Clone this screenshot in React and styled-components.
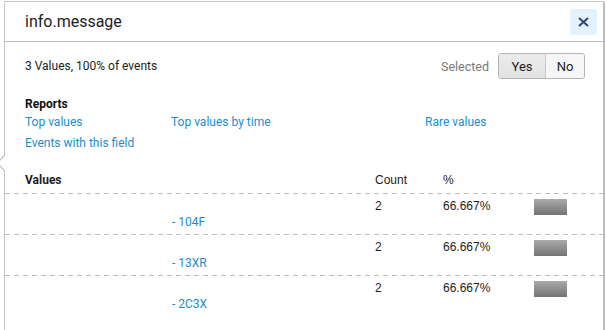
import React from 'react';
import styled, { createGlobalStyle } from 'styled-components';

const GlobalStyle = createGlobalStyle`
  html, body {
    margin: 0;
    padding: 0;
    background: #fff;
    font-family: Roboto, "Liberation Sans", Arial, sans-serif;
    color: #222;
  }
`;

const Page = styled.div`
  width: 607px;
  height: 330px;
  overflow: hidden;
  padding: 1px 2px 0 4px;
  box-sizing: border-box;
`;

const Popover = styled.div`
  position: relative;
  width: 601px;
  height: 340px;
  box-sizing: border-box;
  background: #fff;
  border: 1px solid #c6c6c6;
  border-right: 2px solid #bdbdbd;
  border-radius: 2px;

  /* little arrow pointing at the field list */
  &::before {
    content: '';
    position: absolute;
    left: -9px;
    top: 152px;
    border: 9px solid transparent;
    border-left: 0;
    border-right-color: #c6c6c6;
  }
  &::after {
    content: '';
    position: absolute;
    left: -7px;
    top: 153px;
    border: 8px solid transparent;
    border-left: 0;
    border-right-color: #fff;
  }
`;

const Header = styled.div`
  display: flex;
  align-items: center;
  justify-content: space-between;
  height: 39px;
  padding: 0 6px 0 20px;
  border-bottom: 1px solid #bdbdbd;
`;

const Title = styled.h2`
  margin: 0;
  font-size: 16px;
  font-weight: 400;
  color: #1d1d1d;
`;

const CloseButton = styled.button`
  display: flex;
  align-items: center;
  justify-content: center;
  width: 27px;
  height: 26px;
  padding: 0;
  border: none;
  border-radius: 3px;
  background: #e4f2fd;
  cursor: pointer;
`;

const Body = styled.div`
  padding: 11px 0 0 20px;
`;

const SummaryRow = styled.div`
  display: flex;
  align-items: center;
  justify-content: space-between;
  height: 26px;
  padding-right: 18px;
`;

const Summary = styled.div`
  font-size: 12px;
  color: #1d1d1d;
`;

const SelectedGroup = styled.div`
  display: flex;
  align-items: center;
  gap: 9px;
`;

const SelectedLabel = styled.span`
  font-size: 12.5px;
  color: #7a7a7a;
`;

const Toggle = styled.div`
  display: flex;
  height: 26px;
  border: 1px solid #b4b4b4;
  border-radius: 3px;
  box-sizing: border-box;
  overflow: hidden;
`;

const ToggleOption = styled.button`
  width: ${(p) => p.$width}px;
  padding: 0;
  border: none;
  border-left: ${(p) => (p.$first ? 'none' : '1px solid #c8c8c8')};
  background: ${(p) => (p.$active ? 'linear-gradient(#ececec, #e2e2e2)' : '#f6f6f6')};
  font-family: Roboto, "Liberation Sans", Arial, sans-serif;
  font-size: 13px;
  font-weight: 400;
  color: #1d1d1d;
`;

const SectionTitle = styled.div`
  margin-top: 17px;
  font-size: 12px;
  font-weight: 700;
  color: #111;
  line-height: 16px;
`;

const LinkGrid = styled.div`
  display: grid;
  grid-template-columns: 146px 254px auto;
  grid-auto-rows: 21px;
  align-items: center;
  margin-top: -1px;
`;

const Link = styled.a`
  font-size: 12px;
  color: #1e8ccb;
  text-decoration: none;
  cursor: pointer;
`;

const Table = styled.div`
  margin: 14px 0 0 -20px;
`;

const HeadRow = styled.div`
  display: grid;
  grid-template-columns: 350px 68px 91px auto;
  align-items: center;
  height: 26px;
  padding-left: 20px;
  font-family: "Liberation Sans", Arial, sans-serif;
  font-size: 12px;
  color: #1d1d1d;
`;

const HeadValues = styled.span`
  font-family: Roboto, "Liberation Sans", Arial, sans-serif;
  font-weight: 700;
`;

const Divider = styled.div`
  height: 1px;
  background: repeating-linear-gradient(90deg, #bdbdbd 0 5px, transparent 5px 9px);
`;

const Row = styled.div`
  display: grid;
  grid-template-columns: 350px 68px 91px auto;
  align-items: start;
  height: 40px;
  padding: 4px 0 0 20px;
  box-sizing: border-box;
  font-family: "Liberation Sans", Arial, sans-serif;
  font-size: 12px;
  color: #1d1d1d;
  line-height: 16px;
`;

const ValueCell = styled.div`
  display: flex;
  flex-direction: column;
`;

const ValueLine = styled.span`
  height: 16px;
`;

const ValueCode = styled.a`
  padding-left: 147px;
  font-family: Roboto, "Liberation Sans", Arial, sans-serif;
  font-size: 12px;
  color: #1e8ccb;
`;

const Bar = styled.div`
  width: 33px;
  height: 16px;
  margin-top: 1px;
  background: linear-gradient(#aaaaaa, #747474);
`;

const rows = [
  { code: '- 104F', count: 2, pct: '66.667%' },
  { code: '- 13XR', count: 2, pct: '66.667%' },
  { code: '- 2C3X', count: 2, pct: '66.667%' },
];

const CloseIcon = () => (
  <svg width="11" height="10" viewBox="0 0 11 10">
    <path d="M1 1 L10 9 M10 1 L1 9" stroke="#2d4b72" strokeWidth="2" strokeLinecap="butt" fill="none" />
  </svg>
);

const App = () => (
  <Page>
    <GlobalStyle />
    <Popover>
      <Header>
        <Title>info.message</Title>
        <CloseButton type="button" aria-label="Close">
          <CloseIcon />
        </CloseButton>
      </Header>
      <Body>
        <SummaryRow>
          <Summary>3 Values, 100% of events</Summary>
          <SelectedGroup>
            <SelectedLabel>Selected</SelectedLabel>
            <Toggle>
              <ToggleOption type="button" $first $active $width={46}>Yes</ToggleOption>
              <ToggleOption type="button" $width={39}>No</ToggleOption>
            </Toggle>
          </SelectedGroup>
        </SummaryRow>
        <SectionTitle>Reports</SectionTitle>
        <LinkGrid>
          <Link>Top values</Link>
          <Link>Top values by time</Link>
          <Link>Rare values</Link>
          <Link>Events with this field</Link>
        </LinkGrid>
        <Table>
          <HeadRow>
            <HeadValues>Values</HeadValues>
            <span>Count</span>
            <span>%</span>
            <span />
          </HeadRow>
          {rows.map((r) => (
            <React.Fragment key={r.code}>
              <Divider />
              <Row>
                <ValueCell>
                  <ValueLine />
                  <ValueCode>{r.code}</ValueCode>
                </ValueCell>
                <span>{r.count}</span>
                <span>{r.pct}</span>
                <Bar />
              </Row>
            </React.Fragment>
          ))}
        </Table>
      </Body>
    </Popover>
  </Page>
);

export default App;
